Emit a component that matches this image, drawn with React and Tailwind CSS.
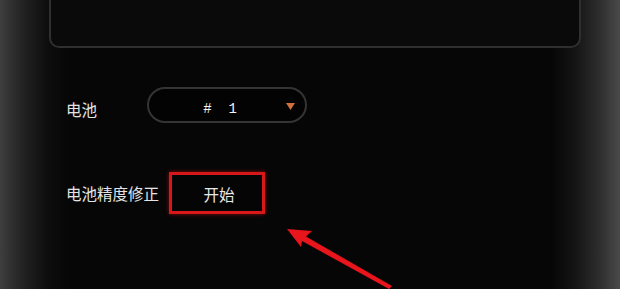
export default function App() {
  return (
    <div className="relative w-[620px] h-[289px] overflow-hidden bg-[linear-gradient(to_right,#3e3e3e_0px,#202020_25px,#0c0c0c_50px,#060606_70px,#060606_550px,#141414_575px,#2e2e2e_600px,#4a4a4a_620px)] font-['Noto_Sans_CJK_SC','Noto_Sans',sans-serif]">
      <div className="flex flex-col">
        <div className="mx-[49px] w-[532px] h-[48px] rounded-b-[10px] border-2 border-t-0 border-[#2f2f2f] bg-[#0a0a0a]" />
        <div className="flex items-center mt-[39px] pl-[66px]">
          <div className="w-[81px] pt-[10px] text-[15.5px] leading-none text-[#e4e4e4]">电池</div>
          <div className="relative flex items-center justify-center w-[160px] h-[36px] rounded-full border-2 border-[#343434] bg-[#030303]">
            <span className="whitespace-pre pt-[8px] text-[14px] leading-none text-[#f4f4f4] font-['Liberation_Mono',monospace] mr-[14px]">#  1</span>
            <svg className="absolute right-[10px] top-[14px]" width="9" height="7" viewBox="0 0 9 7">
              <polygon points="0,0 9,0 4.5,7" fill="#d0703c" />
            </svg>
          </div>
        </div>
        <div className="flex items-center mt-[49px] pl-[66px]">
          <div className="w-[103px] pt-[2px] text-[15.5px] leading-none text-[#e4e4e4]">电池精度修正</div>
          <div className="flex items-center justify-center w-[96px] h-[42px] border-[3px] border-[#d81818] bg-[#050505] shadow-[0_0_4px_rgba(220,20,20,0.6)]">
            <span className="pt-[3px] pl-[4px] text-[15.5px] leading-none text-[#e8e8e8]">开始</span>
          </div>
        </div>
      </div>
      <svg className="absolute left-0 top-0" width="620" height="289" viewBox="0 0 620 289">
        <defs>
          <filter id="b" x="-10%" y="-10%" width="120%" height="120%">
            <feGaussianBlur stdDeviation="0.6" />
          </filter>
        </defs>
        <polygon
          points="287,229 312,231 306,236.5 392,286 389,289 302,241 301,247"
          fill="#e8121a"
          filter="url(#b)"
        />
      </svg>
    </div>
  );
}
